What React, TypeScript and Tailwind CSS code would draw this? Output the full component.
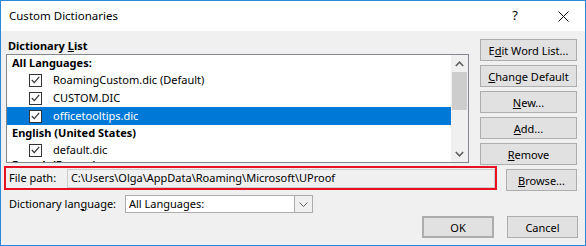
import { ReactNode } from 'react';

const font = { fontFamily: '"Noto Sans", "Segoe UI", sans-serif' };

function Btn({ children, className = '' }: { children: ReactNode; className?: string }) {
  return (
    <div
      className={`flex items-center justify-center h-[22px] bg-[#e1e1e1] border border-[#adadad] text-[11px] text-black leading-none whitespace-nowrap ${className}`}
    >
      {children}
    </div>
  );
}

function Check() {
  return (
    <div className="w-[13px] h-[13px] bg-white border border-[#333333] flex items-center justify-center shrink-0">
      <svg width="9" height="8" viewBox="0 0 9 8">
        <path d="M0.8 4 L3.3 6.6 L8.2 0.8" fill="none" stroke="#333333" strokeWidth="1.2" />
      </svg>
    </div>
  );
}

function Item({ name, selected = false }: { name: string; selected?: boolean }) {
  return (
    <div className={`h-[18px] shrink-0 flex items-center pl-[22px] ${selected ? 'bg-[#0078d7] text-white' : 'text-black'}`}>
      <Check />
      <span className="ml-[11px] whitespace-nowrap">{name}</span>
    </div>
  );
}

function Group({ name }: { name: string }) {
  return (
    <div className="h-[16px] shrink-0 flex items-center pl-[5px] font-bold text-black whitespace-nowrap">{name}</div>
  );
}

export default function App() {
  return (
    <div
      style={font}
      className="w-[586px] h-[246px] border border-[#2b88d8] bg-[#f0f0f0] flex flex-col text-[11px] overflow-hidden"
    >
      {/* title bar */}
      <div className="h-[30px] bg-white flex items-center shrink-0">
        <span className="ml-[8px] text-[11.5px] text-black">Custom Dictionaries</span>
        <span className="ml-auto text-[13px] text-black">?</span>
        <svg className="ml-[40px] mr-[16px]" width="11" height="11" viewBox="0 0 11 11">
          <path d="M0.5 0.5 L10.5 10.5 M10.5 0.5 L0.5 10.5" stroke="#111" strokeWidth="1" />
        </svg>
      </div>

      {/* list + buttons */}
      <div className="h-[135px] flex shrink-0">
        <div className="ml-[5px] w-[463px] pt-[7px] flex flex-col">
          <div className="h-[15px] leading-[15px] font-bold text-black pl-[2px]">
            Dictionary <span className="underline">L</span>ist
          </div>
          <div className="mt-[1px] h-[109px] border border-[#828790] bg-white flex overflow-hidden">
            <div className="flex-1 flex flex-col overflow-hidden">
              <Group name="All Languages:" />
              <Item name="RoamingCustom.dic (Default)" />
              <Item name="CUSTOM.DIC" />
              <Item name="officetooltips.dic" selected />
              <Group name="English (United States)" />
              <Item name="default.dic" />
              <div className="h-[3px] shrink-0 overflow-hidden">
                <div className="pl-[5px] pt-[1px] leading-[10px] font-bold text-black whitespace-nowrap">
                  French (France)
                </div>
              </div>
            </div>
            <div className="w-[17px] bg-[#f0f0f0] flex flex-col items-center shrink-0">
              <div className="h-[17px] flex items-center justify-center">
                <svg width="9" height="6" viewBox="0 0 9 6">
                  <path d="M0.8 5 L4.5 1.2 L8.2 5" fill="none" stroke="#606060" strokeWidth="1.6" />
                </svg>
              </div>
              <div className="w-[15px] h-[38px] bg-[#cdcdcd]" />
              <div className="flex-1" />
              <div className="h-[17px] flex items-center justify-center">
                <svg width="9" height="6" viewBox="0 0 9 6">
                  <path d="M0.8 1 L4.5 4.8 L8.2 1" fill="none" stroke="#606060" strokeWidth="1.6" />
                </svg>
              </div>
            </div>
          </div>
        </div>
        <div className="ml-[11px] w-[97px] pt-[8px] flex flex-col gap-[4px]">
          <Btn>
            E<span className="underline">d</span>it Word List...
          </Btn>
          <Btn>
            <span className="underline">C</span>hange Default
          </Btn>
          <Btn>
            <span className="underline">N</span>ew...
          </Btn>
          <Btn>
            <span className="underline">A</span>dd...
          </Btn>
          <Btn>
            <span className="underline">R</span>emove
          </Btn>
        </div>
      </div>

      {/* file path */}
      <div className="flex items-start shrink-0">
        <div className="ml-[3px] w-[493px] h-[24px] border-2 border-[#e81123] flex items-center">
          <span className="ml-[3px] w-[58px] text-black whitespace-nowrap">File path:</span>
          <div className="w-[429px] h-[19px] border border-[#cccccc] bg-[#f0f0f0] flex items-center pl-[3px] text-black whitespace-nowrap">
            C:\Users\Olga\AppData\Roaming\Microsoft\UProof
          </div>
        </div>
        <Btn className="ml-[9px] mt-[3px] w-[71px]">
          <span className="underline">B</span>rowse...
        </Btn>
      </div>

      {/* language */}
      <div className="mt-[4px] h-[18px] flex items-center shrink-0">
        <span className="ml-[8px] w-[116px] text-black whitespace-nowrap">
          Dictionary lan<span className="underline">g</span>uage:
        </span>
        <div className="w-[188px] h-[18px] border border-[#adadad] bg-white flex">
          <span className="flex-1 pl-[3px] leading-[16px] text-black whitespace-nowrap">All Languages:</span>
          <div className="w-[18px] bg-[#f0f0f0] border-l border-[#adadad] flex items-center justify-center">
            <svg width="9" height="5" viewBox="0 0 9 5">
              <path d="M0.5 0.5 L4.5 4.5 L8.5 0.5" fill="none" stroke="#606060" strokeWidth="1" />
            </svg>
          </div>
        </div>
      </div>

      {/* ok / cancel */}
      <div className="mt-[3px] flex justify-end gap-[13px] pr-[7px] shrink-0">
        <Btn className="w-[72px] border-2 border-[#0078d7]">OK</Btn>
        <Btn className="w-[71px]">Cancel</Btn>
      </div>
    </div>
  );
}
